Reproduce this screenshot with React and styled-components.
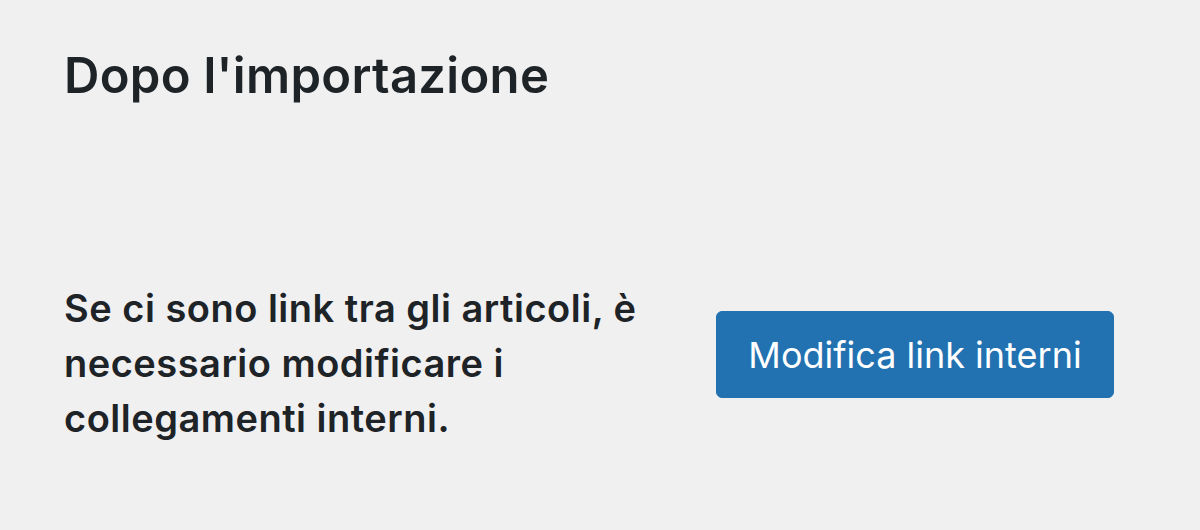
import styled, { createGlobalStyle } from "styled-components";

const GlobalStyle = createGlobalStyle`
  html, body {
    margin: 0;
    padding: 0;
    background: #f0f0f1;
  }
  body {
    font-family: Inter, "Noto Sans", "Liberation Sans", sans-serif;
    color: #1d2327;
  }
`;

const Page = styled.div`
  width: 1200px;
  height: 530px;
  box-sizing: border-box;
  padding: 44px 64px 0;
`;

const Title = styled.h2`
  margin: 0;
  font-size: 49px;
  font-weight: 600;
  line-height: 64px;
  letter-spacing: 0.3px;
`;

const Row = styled.div`
  display: flex;
  align-items: flex-start;
  margin-top: 173px;
`;

const Desc = styled.p`
  margin: 0;
  width: 600px;
  font-size: 38px;
  font-weight: 600;
  line-height: 55px;
  letter-spacing: 0.5px;
`;

const Button = styled.button`
  margin: 30px 0 0 52px;
  width: 398px;
  height: 87px;
  border: 1px solid #2271b1;
  border-radius: 6px;
  background: #2271b1;
  color: #fff;
  font-family: inherit;
  font-size: 36px;
  font-weight: 400;
  cursor: pointer;
`;

export default function App() {
  return (
    <>
      <GlobalStyle />
      <Page>
        <Title>Dopo l'importazione</Title>
        <Row>
          <Desc>
            Se ci sono link tra gli articoli, è necessario modificare i
            collegamenti interni.
          </Desc>
          <Button>Modifica link interni</Button>
        </Row>
      </Page>
    </>
  );
}
